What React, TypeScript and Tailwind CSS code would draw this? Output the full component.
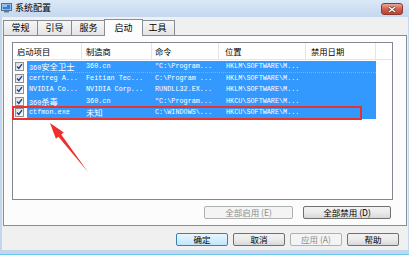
import React from "react";

type Row = { name: React.ReactNode; maker: React.ReactNode; cmd: string; loc: string };

const cjk = (s: string) => (
  <span className="font-['Noto_Sans_CJK_SC',sans-serif] text-[8.4px]">{s}</span>
);

const rows: Row[] = [
  { name: <>360{cjk("安全卫士")}</>, maker: "360.cn", cmd: '"C:\\Program...', loc: "HKLM\\SOFTWARE\\M..." },
  { name: "certreg A...", maker: "Feitian Tec...", cmd: "C:\\Program ...", loc: "HKLM\\SOFTWARE\\M..." },
  { name: "NVIDIA Co...", maker: "NVIDIA Corp...", cmd: "RUNDLL32.EX...", loc: "HKLM\\SOFTWARE\\M..." },
  { name: <>360{cjk("杀毒")}</>, maker: "360.cn", cmd: '"C:\\Program...', loc: "HKCU\\SOFTWARE\\M..." },
  { name: "ctfmon.exe", maker: cjk("未知"), cmd: "C:\\WINDOWS\\...", loc: "HKCU\\SOFTWARE\\M..." },
];

function Check() {
  return (
    <div className="w-[9px] h-[9px] border border-[#8e8f8f] bg-gradient-to-br from-[#dcdcdc] to-[#fbfbfb] flex items-center justify-center">
      <svg width="7" height="7" viewBox="0 0 7 7">
        <path d="M1 3.6 L2.8 5.4 L6 1.2" stroke="#1c3f8f" strokeWidth="1.4" fill="none" />
      </svg>
    </div>
  );
}

function Btn({ children, w, disabled, def }: { children: React.ReactNode; w: string; disabled?: boolean; def?: boolean }) {
  const base = "h-[13px] rounded-[2px] flex items-center justify-center text-[8.5px] leading-none";
  if (disabled)
    return <div className={`${base} ${w} border border-[#adb2b5] bg-[#f4f4f4] text-[#8d8d8d]`}>{children}</div>;
  if (def)
    return (
      <div className={`${base} ${w} border border-[#3c7fb1] bg-gradient-to-b from-[#eaf6fd] to-[#bee6fd] text-black`}>{children}</div>
    );
  return (
    <div className={`${base} ${w} border border-[#707070] bg-gradient-to-b from-[#f2f2f2] via-[#ebebeb] to-[#d8d8d8] text-black`}>{children}</div>
  );
}

function Tab({ label, selected }: { label: string; selected?: boolean }) {
  if (selected)
    return (
      <div className="relative z-10 -mx-[2px] -mb-[1px] h-[17px] w-[39px] border border-b-0 border-[#898c95] bg-[#fcfcfc] flex items-center justify-center text-[9px]">
        {label}
      </div>
    );
  return (
    <div className="-ml-[1px] first:ml-0 h-[15px] w-[35px] border border-b-0 border-[#898c95] bg-gradient-to-b from-[#f6f6f6] to-[#e4e4e4] flex items-center justify-center text-[9px]">
      {label}
    </div>
  );
}

export default function App() {
  return (
    <div className="relative w-[409px] h-[255px] overflow-hidden bg-[#c2d6ee] flex flex-col font-['Noto_Sans_CJK_SC',sans-serif] text-black">
      {/* Title bar */}
      <div className="h-[17px] flex items-start bg-gradient-to-b from-[#dbe8f6] to-[#c4d8ef]">
        <svg className="ml-[1px] mt-[3px]" width="11" height="10" viewBox="0 0 11 10">
          <rect x="0.5" y="0.5" width="10" height="7" fill="#e9eef5" stroke="#5a6d86" />
          <rect x="1.5" y="1.5" width="8" height="5" fill="#2f7fd6" />
          <rect x="2" y="2" width="4" height="2" fill="#8cc4f4" />
          <rect x="3" y="8" width="5" height="1.5" fill="#6c7b8e" />
        </svg>
        <span className="ml-[3px] mt-[2px] text-[9px] leading-[12px]">系统配置</span>
        <div className="ml-auto mr-[6px] mt-[3px] w-[22px] h-[12px] rounded-[3px] border border-[#8b3a31] bg-gradient-to-b from-[#e9a797] via-[#d0604e] to-[#c0412f] flex items-center justify-center">
          <svg width="8" height="7" viewBox="0 0 8 7">
            <path d="M1 1 L7 6 M7 1 L1 6" stroke="#5a2a22" strokeWidth="2.6" />
            <path d="M1 1 L7 6 M7 1 L1 6" stroke="#ffffff" strokeWidth="1.5" />
          </svg>
        </div>
      </div>

      {/* Client area */}
      <div className="h-[233px] ml-[2px] mr-[1px] bg-[#f0f0f0] flex flex-col">
        {/* Tabs */}
        <div className="mt-[2px] ml-[1px] h-[16px] flex items-end">
          <Tab label="常规" />
          <Tab label="引导" />
          <Tab label="服务" />
          <Tab label="启动" selected />
          <Tab label="工具" />
        </div>

        {/* Tab panel */}
        <div className="ml-[1px] w-[404px] h-[191px] border border-[#898c95] bg-[#fcfcfc] pl-[8px] pr-[13px] pt-[6px] flex flex-col">
          {/* List */}
          <div className="w-[381px] h-[158px] border border-[#828790] bg-white flex flex-col">
            {/* Header */}
            <div className="h-[17px] flex border-b border-[#e5e5e5] text-[8.3px] leading-none">
              <div className="w-[69px] pl-[4px] flex items-center border-r border-[#e5e5e5]">启动项目</div>
              <div className="w-[70px] pl-[4px] flex items-center border-r border-[#e5e5e5]">制造商</div>
              <div className="w-[67px] pl-[3px] flex items-center border-r border-[#e5e5e5]">命令</div>
              <div className="w-[87px] pl-[6px] flex items-center border-r border-[#e5e5e5]">位置</div>
              <div className="w-[70px] pl-[5px] flex items-center border-r border-[#e5e5e5]">禁用日期</div>
            </div>
            {/* Rows */}
            <div className="pt-[1px] flex flex-col">
              {rows.map((r, i) => (
                <div key={i} className="h-[11.5px] flex items-center">
                  <div className="w-[14px] pl-[2px] flex items-center">
                    <Check />
                  </div>
                  <div
                    className={`h-full w-[349px] bg-[#3399ff] text-white flex items-center whitespace-nowrap font-['Liberation_Mono','Noto_Sans_CJK_SC',monospace] text-[6.8px] leading-[11px] ${
                      i === 0 ? "border-b border-dotted border-[#9ab]" : ""
                    }`}
                  >
                    <div className="w-[55px] h-[11px] pl-[2px] overflow-hidden">{r.name}</div>
                    <div className="w-[70px] h-[11px] pl-[4px] overflow-hidden">{r.maker}</div>
                    <div className="w-[67px] h-[11px] pl-[3px] overflow-hidden">{r.cmd}</div>
                    <div className="w-[87px] h-[11px] pl-[7px] overflow-hidden">{r.loc}</div>
                    <div className="w-[70px]"></div>
                  </div>
                </div>
              ))}
            </div>
          </div>
          {/* Panel buttons */}
          <div className="mt-[6px] pr-[2px] flex justify-end gap-[10px]">
            <Btn w="w-[89px]" disabled>全部启用 (E)</Btn>
            <Btn w="w-[88px]">全部禁用 (D)</Btn>
          </div>
        </div>

        {/* Dialog buttons */}
        <div className="mt-[7px] pr-[9px] flex justify-end gap-[5px]">
          <Btn w="w-[52px]" def>确定</Btn>
          <Btn w="w-[52px]">取消</Btn>
          <Btn w="w-[52px]" disabled>应用 (A)</Btn>
          <Btn w="w-[52px]">帮助</Btn>
        </div>
      </div>

      {/* Bottom frame accent */}
      <div className="absolute left-0 right-0 bottom-0 h-[1px] bg-[#6ac6ea]" />

      {/* Red annotation rectangle */}
      <div className="absolute left-[12px] top-[106px] w-[350px] h-[14px] border-2 border-[#e8322c] pointer-events-none" />

      {/* Red arrow */}
      <svg className="absolute left-0 top-0 pointer-events-none" width="409" height="255" viewBox="0 0 409 255">
        <polygon
          points="50,123 63.8,132.5 61.2,134.5 88,172 58.4,136.7 55.9,138.7"
          fill="#ee2f2a"
        />
      </svg>
    </div>
  );
}
